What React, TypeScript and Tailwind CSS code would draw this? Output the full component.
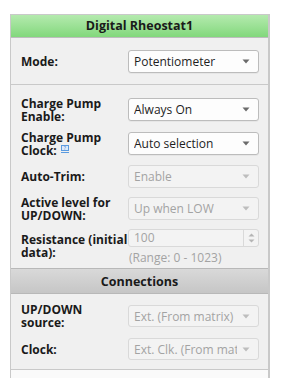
import React from "react";

const font = { fontFamily: '"Open Sans", "Noto Sans", Arial, sans-serif' };

function Arrow({ disabled }: { disabled?: boolean }) {
  return (
    <svg width="8" height="5" viewBox="0 0 8 5" className="shrink-0">
      <path d="M0.5 0.5 L7.5 0.5 L4 4.5 Z" fill={disabled ? "#bdbdbd" : "#6b6b6b"} />
    </svg>
  );
}

function Select({ value, disabled, h = "h-[23px]" }: { value: string; disabled?: boolean; h?: string }) {
  return (
    <div
      className={`w-[131px] ${h} shrink-0 rounded-[3px] border flex items-center pl-[5px] pr-[8px] ${
        disabled
          ? "border-[#d9d9d9] bg-[#f3f3f3] text-[#a3a3a3]"
          : "border-[#bcbcbc] bg-[#fdfdfd] text-[#1e1e1e] shadow-[0_1px_0_rgba(0,0,0,0.04)]"
      }`}
    >
      <span className="flex-1 min-w-0 mr-[5px] whitespace-nowrap overflow-hidden text-[12px] leading-[17px]">{value}</span>
      <Arrow disabled={disabled} />
    </div>
  );
}

function Label({ children }: { children: React.ReactNode }) {
  return (
    <div className="w-[107px] shrink-0 text-[12px] leading-[13px] font-bold text-[#1a1a1a]">{children}</div>
  );
}

export default function App() {
  return (
    <div className="w-[281px] h-[378px] bg-white overflow-hidden pt-[14px] pl-[10px]" style={font}>
      <div className="w-[260px] h-[364px] border-l border-t border-r-2 border-[#c9c9c9] bg-[#f0f0f0] flex flex-col">
        {/* header */}
        <div className="h-[23px] shrink-0 border-b border-[#bdbdbd] bg-gradient-to-b from-[#b4eaae] to-[#82d87c] flex items-center justify-center text-[12.5px] font-bold text-[#1a1a1a]">
          Digital Rheostat1
        </div>
        {/* mode */}
        <div className="h-[47px] shrink-0 border-b border-[#c9c9c9] flex items-center pl-[10px]">
          <Label>Mode:</Label>
          <Select value="Potentiometer" />
        </div>
        {/* settings */}
        <div className="flex flex-col pl-[10px] h-[183px] shrink-0">
          <div className="flex items-center h-[23px] mt-[13px]">
            <Label>
              Charge Pump
              <br />
              Enable:
            </Label>
            <Select value="Always On" />
          </div>
          <div className="flex items-center h-[23px] mt-[11px]">
            <Label>
              Charge Pump
              <br />
              <span className="inline-flex items-center">
                Clock:
                <span className="ml-[4px] mt-[-2px] inline-flex flex-col items-center">
                  <span className="w-[8px] h-[6px] border border-[#5b9be0] bg-[#dceafa] text-[5px] leading-[4px] text-[#3a7bd5] flex items-center justify-center font-normal">
                    ?
                  </span>
                  <span className="w-[8px] h-px bg-[#5b9be0] mt-[1px]" />
                </span>
              </span>
            </Label>
            <Select value="Auto selection" />
          </div>
          <div className="flex items-center h-[23px] mt-[10px]">
            <Label>Auto-Trim:</Label>
            <Select value="Enable" disabled />
          </div>
          <div className="flex items-center h-[23px] mt-[9px]">
            <Label>
              Active level for
              <br />
              UP/DOWN:
            </Label>
            <Select value="Up when LOW" disabled />
          </div>
          <div className="flex items-start mt-[9px]">
            <div className="pt-[4px]">
              <Label>
                Resistance (initial
                <br />
                data):
              </Label>
            </div>
            <div className="flex flex-col">
              <div className="w-[131px] h-[18px] rounded-[3px] border border-[#d9d9d9] bg-[#f3f3f3] flex">
                <span className="flex-1 pl-[5px] text-[12px] leading-[16px] text-[#a3a3a3]">100</span>
                <div className="w-[15px] border-l border-[#d9d9d9] flex flex-col items-center justify-center gap-[2px]">
                  <svg width="7" height="4" viewBox="0 0 7 4">
                    <path d="M0.5 3.5 L3.5 0.5 L6.5 3.5 Z" fill="#b5b5b5" />
                  </svg>
                  <svg width="7" height="4" viewBox="0 0 7 4">
                    <path d="M0.5 0.5 L6.5 0.5 L3.5 3.5 Z" fill="#b5b5b5" />
                  </svg>
                </div>
              </div>
              <span className="mt-[3px] text-[12px] leading-[16px] text-[#a3a3a3] pl-[1px]">(Range: 0 - 1023)</span>
            </div>
          </div>
        </div>
        {/* connections header */}
        <div className="h-[26px] shrink-0 border-t border-b border-[#b8b8b8] bg-gradient-to-b from-[#d9d9d9] to-[#c6c6c6] flex items-center justify-center pt-[2px] text-[12.5px] font-bold text-[#1a1a1a]">
          Connections
        </div>
        <div className="flex flex-col pl-[10px] h-[76px] shrink-0 border-b border-[#c9c9c9]">
          <div className="flex items-center h-[22px] mt-[11px]">
            <Label>
              UP/DOWN
              <br />
              source:
            </Label>
            <Select value="Ext. (From matrix)" disabled h="h-[22px]" />
          </div>
          <div className="flex items-center h-[22px] mt-[11px]">
            <Label>Clock:</Label>
            <Select value="Ext. Clk. (From matrix)" disabled h="h-[22px]" />
          </div>
        </div>
        <div className="flex-1 bg-[#fafafa]" />
      </div>
    </div>
  );
}
